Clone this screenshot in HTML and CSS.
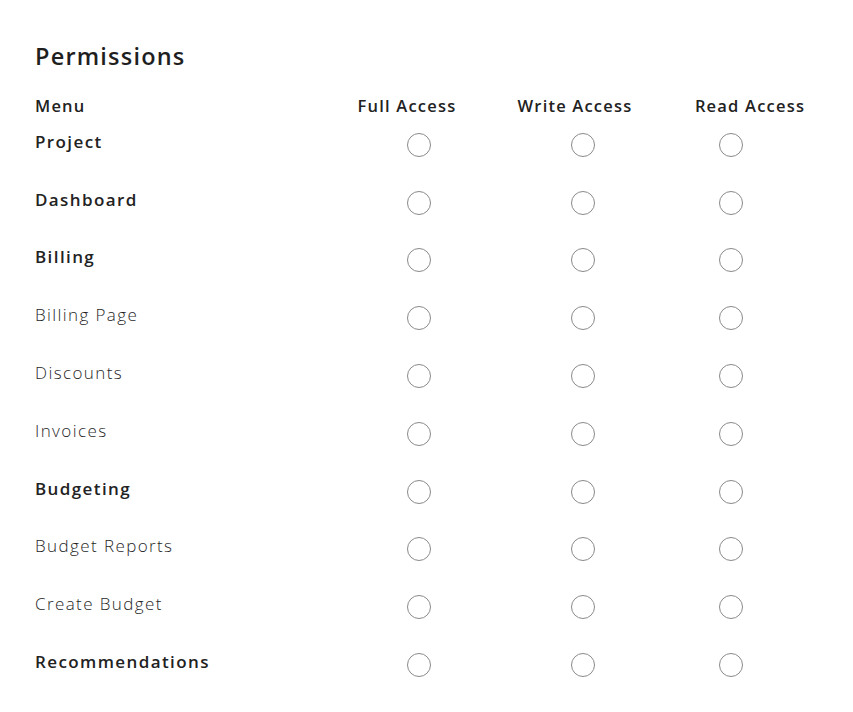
FILE: index.html
```html
<!DOCTYPE html>
<html lang="en">
<head>
<meta charset="utf-8">
<title>Permissions</title>
<link rel="stylesheet" href="styles.css">
</head>
<body>
<div class="page">
  <h1 class="title">Permissions</h1>
  <div class="table">
    <div class="head menu-h">Menu</div>
    <div class="head c2">Full Access</div>
    <div class="head c3">Write Access</div>
    <div class="head c4">Read Access</div>

    <div class="label strong">Project</div>
    <div class="cell c2"><span class="radio"></span></div>
    <div class="cell c3"><span class="radio"></span></div>
    <div class="cell c4"><span class="radio"></span></div>

    <div class="label strong">Dashboard</div>
    <div class="cell c2"><span class="radio"></span></div>
    <div class="cell c3"><span class="radio"></span></div>
    <div class="cell c4"><span class="radio"></span></div>

    <div class="label strong">Billing</div>
    <div class="cell c2"><span class="radio"></span></div>
    <div class="cell c3"><span class="radio"></span></div>
    <div class="cell c4"><span class="radio"></span></div>

    <div class="label">Billing Page</div>
    <div class="cell c2"><span class="radio"></span></div>
    <div class="cell c3"><span class="radio"></span></div>
    <div class="cell c4"><span class="radio"></span></div>

    <div class="label">Discounts</div>
    <div class="cell c2"><span class="radio"></span></div>
    <div class="cell c3"><span class="radio"></span></div>
    <div class="cell c4"><span class="radio"></span></div>

    <div class="label">Invoices</div>
    <div class="cell c2"><span class="radio"></span></div>
    <div class="cell c3"><span class="radio"></span></div>
    <div class="cell c4"><span class="radio"></span></div>

    <div class="label strong">Budgeting</div>
    <div class="cell c2"><span class="radio"></span></div>
    <div class="cell c3"><span class="radio"></span></div>
    <div class="cell c4"><span class="radio"></span></div>

    <div class="label">Budget Reports</div>
    <div class="cell c2"><span class="radio"></span></div>
    <div class="cell c3"><span class="radio"></span></div>
    <div class="cell c4"><span class="radio"></span></div>

    <div class="label">Create Budget</div>
    <div class="cell c2"><span class="radio"></span></div>
    <div class="cell c3"><span class="radio"></span></div>
    <div class="cell c4"><span class="radio"></span></div>

    <div class="label strong">Recommendations</div>
    <div class="cell c2"><span class="radio"></span></div>
    <div class="cell c3"><span class="radio"></span></div>
    <div class="cell c4"><span class="radio"></span></div>
  </div>
</div>
</body>
</html>
```
FILE: styles.css
```css
* { box-sizing: border-box; }
html, body { margin: 0; padding: 0; background: #ffffff; }
body {
  font-family: "Open Sans", "Noto Sans", sans-serif;
  color: #222222;
}
.page {
  padding: 40px 0 0 35px;
  width: 853px;
}
.title {
  margin: 0;
  font-size: 23.5px;
  font-weight: 600;
  line-height: 32px;
  letter-spacing: 1.2px;
  color: #1f1f1f;
}
.table {
  margin-top: 24px;
  display: grid;
  grid-template-columns: 307px 130px 206px 144px;
  grid-auto-rows: 57.8px;
  grid-template-rows: 20px;
  row-gap: 0;
}
.head {
  font-size: 16.5px;
  font-weight: 600;
  line-height: 20px;
  letter-spacing: 1.2px;
  color: #222222;
  white-space: nowrap;
}
.head.c2, .head.c3, .head.c4 { text-align: center; }
.label {
  display: flex;
  align-items: center;
  padding-bottom: 7px;
  font-size: 17px;
  font-weight: 300;
  letter-spacing: 1.4px;
  color: #1f1f1f;
  white-space: nowrap;
}
.label.strong {
  font-weight: 600;
  letter-spacing: 1.4px;
  color: #222222;
}
.cell {
  display: flex;
  align-items: center;
}
.cell.c2 { padding-left: 65px; }
.cell.c3 { padding-left: 99px; }
.cell.c4 { padding-left: 41px; }
.radio {
  display: block;
  width: 24px;
  height: 24px;
  border: 1px solid #8a8a8a;
  border-radius: 50%;
  background: #fff;
}
```
